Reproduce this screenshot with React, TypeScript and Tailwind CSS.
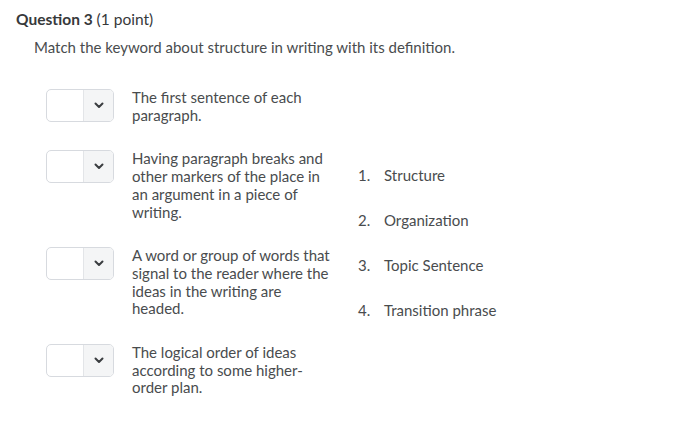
import React from 'react';

const definitions = [
    ['The first sentence of each', 'paragraph.'],
    ['Having paragraph breaks and', 'other markers of the place in', 'an argument in a piece of', 'writing.'],
    ['A word or group of words that', 'signal to the reader where the', 'ideas in the writing are', 'headed.'],
    ['The logical order of ideas', 'according to some higher-', 'order plan.'],
];

const choices = ['Structure', 'Organization', 'Topic Sentence', 'Transition phrase'];

const ChoiceSelect: React.FC = () => (
    <div className="flex h-[33px] w-[68px] shrink-0 overflow-hidden rounded-[5px] border border-[#d7dadf] bg-white">
        <div className="flex-1" />
        <div className="flex w-[30px] items-center justify-center border-l border-[#e3e5e8] bg-[#f4f5f6]">
            <svg width="10" height="7" viewBox="0 0 10 7" fill="none">
                <path d="M1.5 1.5 L5 5 L8.5 1.5" stroke="#3a3d40" strokeWidth="2" strokeLinecap="round" strokeLinejoin="round" />
            </svg>
        </div>
    </div>
);

const App: React.FC = () => {
    return (
        <div className="h-[436px] w-[700px] bg-white text-[#494c4e]" style={{ fontFamily: 'Lato, "Open Sans", sans-serif' }}>
            <div className="px-[16px] pt-[9px]">
                <h2 className="text-[15.5px] leading-[20px] text-[#37393b]">
                    <span className="font-bold">Question 3</span> <span>(1 point)</span>
                </h2>
                <p className="mt-[8px] pl-[18px] text-[15px] leading-[20px]">
                    Match the keyword about structure in writing with its definition.
                </p>
            </div>

            <div className="mt-[32px] flex pl-[46px]">
                <div className="flex flex-col gap-[26px]">
                    {definitions.map((lines, i) => (
                        <div key={i} className="flex gap-[18px]">
                            <ChoiceSelect />
                            <div className="w-[212px] text-[15px] leading-[17.7px]">
                                {lines.map((line, j) => (
                                    <div key={j}>{line}</div>
                                ))}
                            </div>
                        </div>
                    ))}
                </div>

                <ol className="ml-[14px] flex flex-col gap-[27px] pt-[77px] text-[15px] leading-[18px]">
                    {choices.map((c, i) => (
                        <li key={c} className="flex">
                            <span className="w-[26px]">{i + 1}.</span>
                            <span>{c}</span>
                        </li>
                    ))}
                </ol>
            </div>
        </div>
    );
};

export default App;
